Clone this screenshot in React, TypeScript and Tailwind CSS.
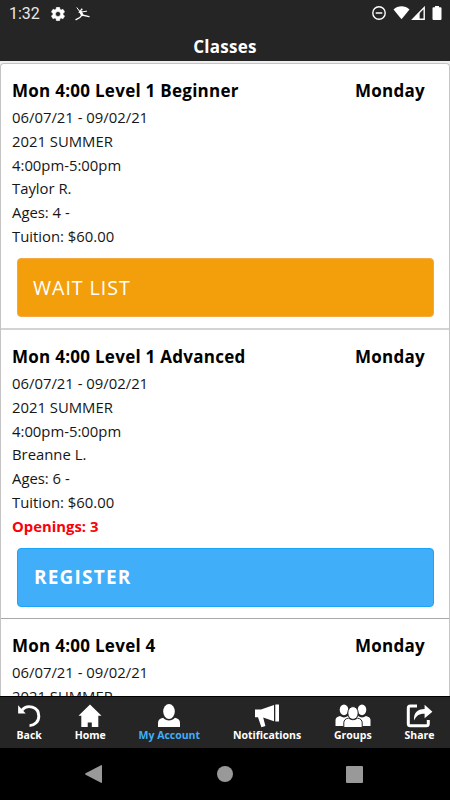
import type { ReactNode } from 'react'

type ClassInfo = {
  title: string
  day: string
  lines: string[]
  openings?: number
  action?: 'wait' | 'register'
}

const CLASSES: ClassInfo[] = [
  {
    title: 'Mon 4:00 Level 1 Beginner',
    day: 'Monday',
    lines: ['06/07/21 - 09/02/21', '2021 SUMMER', '4:00pm-5:00pm', 'Taylor R.', 'Ages: 4 -', 'Tuition: $60.00'],
    action: 'wait',
  },
  {
    title: 'Mon 4:00 Level 1 Advanced',
    day: 'Monday',
    lines: ['06/07/21 - 09/02/21', '2021 SUMMER', '4:00pm-5:00pm', 'Breanne L.', 'Ages: 6 -', 'Tuition: $60.00'],
    openings: 3,
    action: 'register',
  },
  {
    title: 'Mon 4:00 Level 4',
    day: 'Monday',
    lines: ['06/07/21 - 09/02/21', '2021 SUMMER'],
  },
]

function StatusBar() {
  return (
    <div className="h-[27px] flex-none flex items-center pl-[9px] pr-[8px] text-white">
      <span className="font-['Roboto',sans-serif] text-[16px] leading-none w-[42px] text-[#e8e8e8]">1:32</span>
      <svg width="14" height="14" viewBox="2 2 20 20" fill="currentColor">
        <path d="M19.14 12.94c.04-.3.06-.61.06-.94 0-.32-.02-.64-.07-.94l2.03-1.58a.49.49 0 0 0 .12-.61l-1.92-3.32a.49.49 0 0 0-.59-.22l-2.39.96a7 7 0 0 0-1.62-.94l-.36-2.54a.48.48 0 0 0-.48-.41h-3.84a.48.48 0 0 0-.47.41l-.36 2.54c-.59.24-1.13.57-1.62.94l-2.39-.96a.49.49 0 0 0-.59.22L2.74 8.87a.48.48 0 0 0 .12.61l2.03 1.58a6 6 0 0 0-.02 1.88l-2.03 1.58a.49.49 0 0 0-.12.61l1.92 3.32c.12.22.37.29.59.22l2.39-.96c.5.38 1.03.7 1.62.94l.36 2.54c.05.24.24.41.48.41h3.84c.24 0 .44-.17.47-.41l.36-2.54a7 7 0 0 0 1.62-.94l2.39.96c.22.08.47 0 .59-.22l1.92-3.32a.48.48 0 0 0-.12-.61zM12 15.6a3.6 3.6 0 1 1 0-7.2 3.6 3.6 0 0 1 0 7.2z" stroke="currentColor" strokeWidth=".8" />
      </svg>
      <svg className="ml-[10px]" width="15" height="14" viewBox="0 0 15 14" fill="none" stroke="currentColor" strokeLinecap="round">
        <path d="M2 .8 4.6 4.4M4 5.4 11.6 4.2" strokeWidth="1" />
        <path d="M5.4 4.4 7 7.8" strokeWidth="2.6" />
        <path d="M7.2 8 14 9.6M6.4 8.6 4.8 10.6 1 12.6" strokeWidth="1.3" />
        <circle cx="6.6" cy="2.4" r="1" fill="currentColor" stroke="none" />
      </svg>
      <div className="ml-auto -mt-px flex items-center">
        <svg width="14" height="14" viewBox="0 0 14 14" fill="none" stroke="currentColor">
          <circle cx="7" cy="7" r="6.2" strokeWidth="1.4" />
          <path d="M3.7 7h6.6" strokeWidth="1.5" />
        </svg>
        <svg className="ml-[7px]" width="17" height="14" viewBox="0 0 17 14" fill="currentColor">
          <path d="M.5 3.4C5-.8 12-.8 16.5 3.4L8.5 13.2z" />
        </svg>
        <svg className="ml-[1px]" width="14" height="14" viewBox="0 0 14 14">
          <path d="M1.8 13.2 13.2 1.6v11.6z" fill="none" stroke="currentColor" strokeWidth="1.4" />
          <path d="M2 13.3 8.6 6v7.3z" fill="currentColor" />
        </svg>
        <svg className="ml-[7px]" width="10" height="14" viewBox="0 0 10 14" fill="currentColor">
          <path d="M3 0h4v1.3h1.5q1 0 1 1v10.6q0 1-1 1h-7q-1 0-1-1V2.3q0-1 1-1H3z" />
        </svg>
      </div>
    </div>
  )
}

function ClassCard({ item }: { item: ClassInfo }) {
  return (
    <div
      className={`pt-[11px] last:border-b-0 ${
        item.action === 'wait' ? 'pb-[11px] border-b-2 border-[#d3d3d3]' : 'pb-[11.5px] border-b border-[#a9a9a9]'
      }`}
    >
      <div className="flex justify-between pl-[11px] pr-[24px] h-[31px] items-center text-[17px] font-bold tracking-[0.27px]">
        <h2>{item.title}</h2>
        <span>{item.day}</span>
      </div>
      <div className="pl-[11px] text-[14.85px] leading-[23.75px] text-[#161616]">
        {item.lines.map(line => (
          <p key={line}>{line}</p>
        ))}
        {item.openings && <p className="font-bold text-[#fb0007]">Openings: {item.openings}</p>}
      </div>
      {item.action === 'wait' && (
        <button className="block mt-[9.5px] ml-[16px] w-[417px] h-[59px] pl-[15px] rounded-[4px] border border-[#f5a843] bg-[#f39f0c] text-left text-white text-[19.6px] tracking-[0.95px]">
          WAIT LIST
        </button>
      )}
      {item.action === 'register' && (
        <button className="block mt-[9.5px] ml-[16px] w-[417px] h-[59px] pl-[16px] rounded-[4px] border border-[#1ba5f8] bg-[#40aef9] text-left text-white text-[19px] font-bold tracking-[1.2px]">
          REGISTER
        </button>
      )}
    </div>
  )
}

function NavItem({ label, active, children }: { label: string; active?: boolean; children: ReactNode }) {
  return (
    <div className="flex flex-col items-center">
      {children}
      <span className={`text-[10.5px] leading-[15px] font-bold whitespace-nowrap ${active ? 'text-[#40aef9]' : 'text-white'}`}>
        {label}
      </span>
    </div>
  )
}

function BottomNav() {
  return (
    <nav className="h-[52px] flex-none flex justify-between pl-[16.5px] pr-[15.5px] pt-[7px] bg-[#252525] border-t border-black text-white">
      <NavItem label="Back">
        <svg width="24" height="24" viewBox="0 0 24 24">
          <path d="M5 6.2C10-.2 21.8 2.4 21.8 12.2c0 5.2-4 9.2-9.3 9.4" fill="none" stroke="currentColor" strokeWidth="2.9" />
          <path d="M1.1 1.2v8.2h7.6z" fill="currentColor" />
        </svg>
      </NavItem>
      <NavItem label="Home">
        <svg width="24" height="24" viewBox="0 0 24 24" fill="currentColor">
          <path d="M12 .5 .5 11.7h2.8V23h6.4v-4.5h4.1V23h6.5V11.7h3.2z" />
        </svg>
      </NavItem>
      <NavItem label="My Account" active>
        <svg width="24" height="24" viewBox="0 0 24 24" fill="currentColor">
          <ellipse cx="12" cy="7.5" rx="5.8" ry="7.4" />
          <path d="M1 23v-4q0-4.2 5.1-5.2c3.2 3.6 8.6 3.6 11.8 0Q23 14.8 23 19v4z" />
        </svg>
      </NavItem>
      <NavItem label="Notifications">
        <svg width="26" height="24" viewBox="0 0 26 24" fill="currentColor">
          <path d="M1 5.4h6L20 .9v16.3L9.2 13.6l2.2 8.4-4 1.2L4 13.2H1z" />
          <path d="M21.3.5H25v17h-3.7z" />
        </svg>
      </NavItem>
      <NavItem label="Groups">
        <svg className="-mx-1" width="36" height="24" viewBox="0 0 36 24" fill="currentColor">
          <ellipse cx="9" cy="5.8" rx="4.3" ry="5.4" />
          <ellipse cx="27" cy="5.8" rx="4.3" ry="5.4" />
          <path d="M.5 22v-6q0-3 4.5-4 4 2.8 8 0l2 2-5.5 3v5z" />
          <path d="M35.5 22v-6q0-3-4.5-4-4 2.8-8 0l-2 2 5.5 3v5z" />
          <ellipse cx="18" cy="9" rx="5.2" ry="6.4" stroke="#252525" strokeWidth="1" />
          <path d="M8.8 23.5v-4.6q0-4 4.7-4.8 4.5 3.3 9 0 4.7.8 4.7 4.8v4.6z" stroke="#252525" strokeWidth="1" />
        </svg>
      </NavItem>
      <NavItem label="Share">
        <svg className="-mx-px" width="27" height="24" viewBox="0 0 27 24">
          <path d="M11 2.1H4.3q-2 0-2 2v15.6q0 2 2 2h16q2 0 2-2V16" fill="none" stroke="currentColor" strokeWidth="3" />
          <path d="M8 16.5C7.6 8.7 11 5.2 18.6 5V.8l7.8 6.9-7.8 6.5V9.8c-5.1 0-8 1.4-10.6 6.7z" fill="currentColor" />
        </svg>
      </NavItem>
    </nav>
  )
}

function SystemBar() {
  return (
    <div className="h-[52px] flex-none flex items-center justify-between pl-[85px] pr-[87px] bg-black text-[#999]">
      <svg width="18" height="18" viewBox="0 0 18 18" fill="currentColor">
        <path d="M.6 8.3 16 .2q1-.4 1 .6v16.4q0 1-1 .6L.6 9.7q-.9-.7 0-1.4z" />
      </svg>
      <div className="size-4 rounded-full bg-[#999]" />
      <div className="size-[17px] rounded-[1px] bg-[#999]" />
    </div>
  )
}

export default function App() {
  return (
    <div className="w-[450px] h-[800px] flex flex-col overflow-hidden bg-[#252525] font-['Open_Sans',sans-serif] text-black">
      <StatusBar />
      <header className="h-[34px] flex-none flex items-center justify-center pt-[5px] text-white text-[17px] font-bold tracking-[0.25px]">
        <h1>Classes</h1>
      </header>
      <main className="flex-1 min-h-0 overflow-hidden pt-[2px] bg-[#eee]">
        <div className="bg-white border border-b-0 border-[#c4c4c4] rounded-t-[4px]">
          {CLASSES.map(item => (
            <ClassCard key={item.title} item={item} />
          ))}
        </div>
      </main>
      <BottomNav />
      <SystemBar />
    </div>
  )
}
